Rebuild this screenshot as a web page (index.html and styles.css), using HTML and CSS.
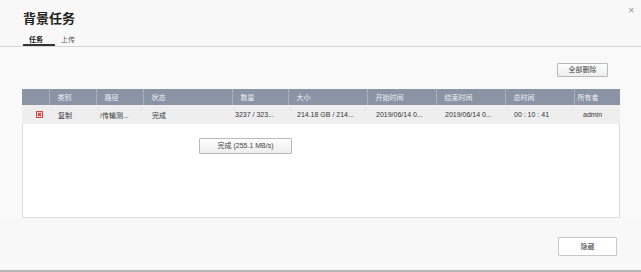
FILE: index.html
```html
<!DOCTYPE html>
<html lang="zh">
<head>
<meta charset="utf-8">
<title>背景任务</title>
<link rel="stylesheet" href="styles.css">
</head>
<body>
<div class="dialog">
  <header class="head">
    <h1 class="title">背景任务</h1>
    <span class="close">&#x2715;</span>
  </header>
  <nav class="tabs">
    <span class="tab active">任务</span>
    <span class="tab">上传</span>
  </nav>
  <main class="content">
    <div class="toolbar"><button class="btn">全部删除</button></div>
    <section class="box">
      <table class="grid">
        <colgroup>
          <col class="c-chk"><col class="c-type"><col class="c-path"><col class="c-state"><col class="c-num"><col class="c-size"><col class="c-start"><col class="c-end"><col class="c-total"><col class="c-owner">
        </colgroup>
        <thead>
          <tr><th></th><th>类别</th><th>路径</th><th>状态</th><th>数量</th><th>大小</th><th>开始时间</th><th>结束时间</th><th>总时间</th><th class="owner-h">所有者</th></tr>
        </thead>
        <tbody>
          <tr>
            <td class="chk"><span class="xbox"><svg viewBox="0 0 7 7" width="7" height="7"><rect x="0.5" y="0.5" width="6" height="6" fill="#f9e3e3" stroke="#d04848"/><path d="M2 2 L5 5 M5 2 L2 5" stroke="#d02828" stroke-width="1.1"/></svg></span></td>
            <td>复制</td><td class="path">/传输测...</td><td>完成</td><td class="num">3237 / 323...</td><td>214.18 GB / 214...</td><td>2019/06/14 0...</td><td>2019/06/14 0...</td><td>00 : 10 : 41</td><td>admin</td>
          </tr>
        </tbody>
      </table>
      <div class="status-row"><button class="btn status">完成 (255.1 MB/s)</button></div>
    </section>
  </main>
  <footer class="foot"><button class="btn hide">隐藏</button></footer>
</div>
</body>
</html>
```

FILE: styles.css
```css
* { box-sizing: border-box; }
html, body { margin: 0; padding: 0; }
body {
  width: 641px;
  height: 272px;
  background: #f8f8f8;
  font-family: "Liberation Sans", "Noto Sans CJK SC", sans-serif;
  font-size: 7px;
  color: #333;
  overflow: hidden;
}
.dialog {
  height: 272px;
  display: flex;
  flex-direction: column;
  border-bottom: 2px solid #b4b4b4;
}
.head {
  display: flex;
  justify-content: space-between;
  align-items: flex-start;
  padding: 9px 6px 0 23px;
  height: 34px;
}
.title {
  margin: 0;
  font-size: 13px;
  line-height: 17px;
  font-weight: bold;
  color: #222;
  letter-spacing: 0;
  font-family: "Noto Sans CJK SC", sans-serif;
}
.close {
  font-size: 8px;
  color: #9a9a9a;
  line-height: 8px;
  margin-top: -2px;
}
.tabs {
  display: flex;
  padding-left: 23px;
  height: 13px;
  border-bottom: 1px solid #d6d6d6;
}
.tab {
  font-family: "Noto Sans CJK SC", sans-serif;
  font-size: 7px;
  line-height: 10px;
  padding: 0 7px 0 6px;
  color: #555;
}
.tab.active {
  color: #222;
  font-weight: bold;
  width: 32px;
  border-bottom: 2px solid #333;
}
.content {
  padding: 16px 21px 0 22px;
  background: #f9f9f9;
}
.toolbar {
  display: flex;
  justify-content: flex-end;
  padding-right: 12px;
  height: 26px;
}
.btn {
  font-family: "Liberation Sans", "Noto Sans CJK SC", sans-serif;
  font-size: 7px;
  color: #444;
  background: linear-gradient(#fdfdfd, #eeeeee);
  border: 1px solid #b9b9b9;
  border-radius: 1px;
  padding: 0;
  height: 14px;
  width: 51px;
  line-height: 12px;
}
.box {
  background: #fff;
  border: 1px solid #dcdcdc;
  border-top: 0;
  height: 129px;
}
.grid {
  width: 598px;
  border-collapse: collapse;
  table-layout: fixed;
  margin-left: -1px;
}
.c-chk { width: 27px; }
.c-type { width: 47px; }
.c-path { width: 47px; }
.c-state { width: 89px; }
.c-num { width: 56px; }
.c-size { width: 79px; }
.c-start { width: 69px; }
.c-end { width: 69px; }
.c-total { width: 69px; }
.c-owner { width: 46px; }
.grid th {
  background: #8b94a4;
  color: #eef0f4;
  font-weight: normal;
  text-align: left;
  height: 16px;
  padding: 0 0 0 8px;
  border-left: 1px solid #aab1bd;
  white-space: nowrap;
  overflow: hidden;
}
.grid th:first-child { border-left: 0; }
.grid th.owner-h { padding-left: 3px; }
.grid td {
  background: #eeeeee;
  height: 19px;
  padding: 0 0 0 9px;
  white-space: nowrap;
  overflow: hidden;
  color: #333;
}
.grid td.path { padding-left: 4px; }
.grid td.num { padding-left: 3px; }
.grid td.chk { padding-left: 14px; }
.xbox { display: inline-block; width: 7px; height: 7px; vertical-align: middle; }
.xbox svg { display: block; }
.status-row {
  padding: 14px 0 0 176px;
}
.btn.status {
  width: 93px;
  height: 16px;
  line-height: 14px;
}
.foot {
  display: flex;
  justify-content: flex-end;
  padding: 19px 24px 0 0;
}
.btn.hide {
  width: 59px;
  height: 19px;
  background: #fff;
  border-color: #c8c8c8;
}
```
